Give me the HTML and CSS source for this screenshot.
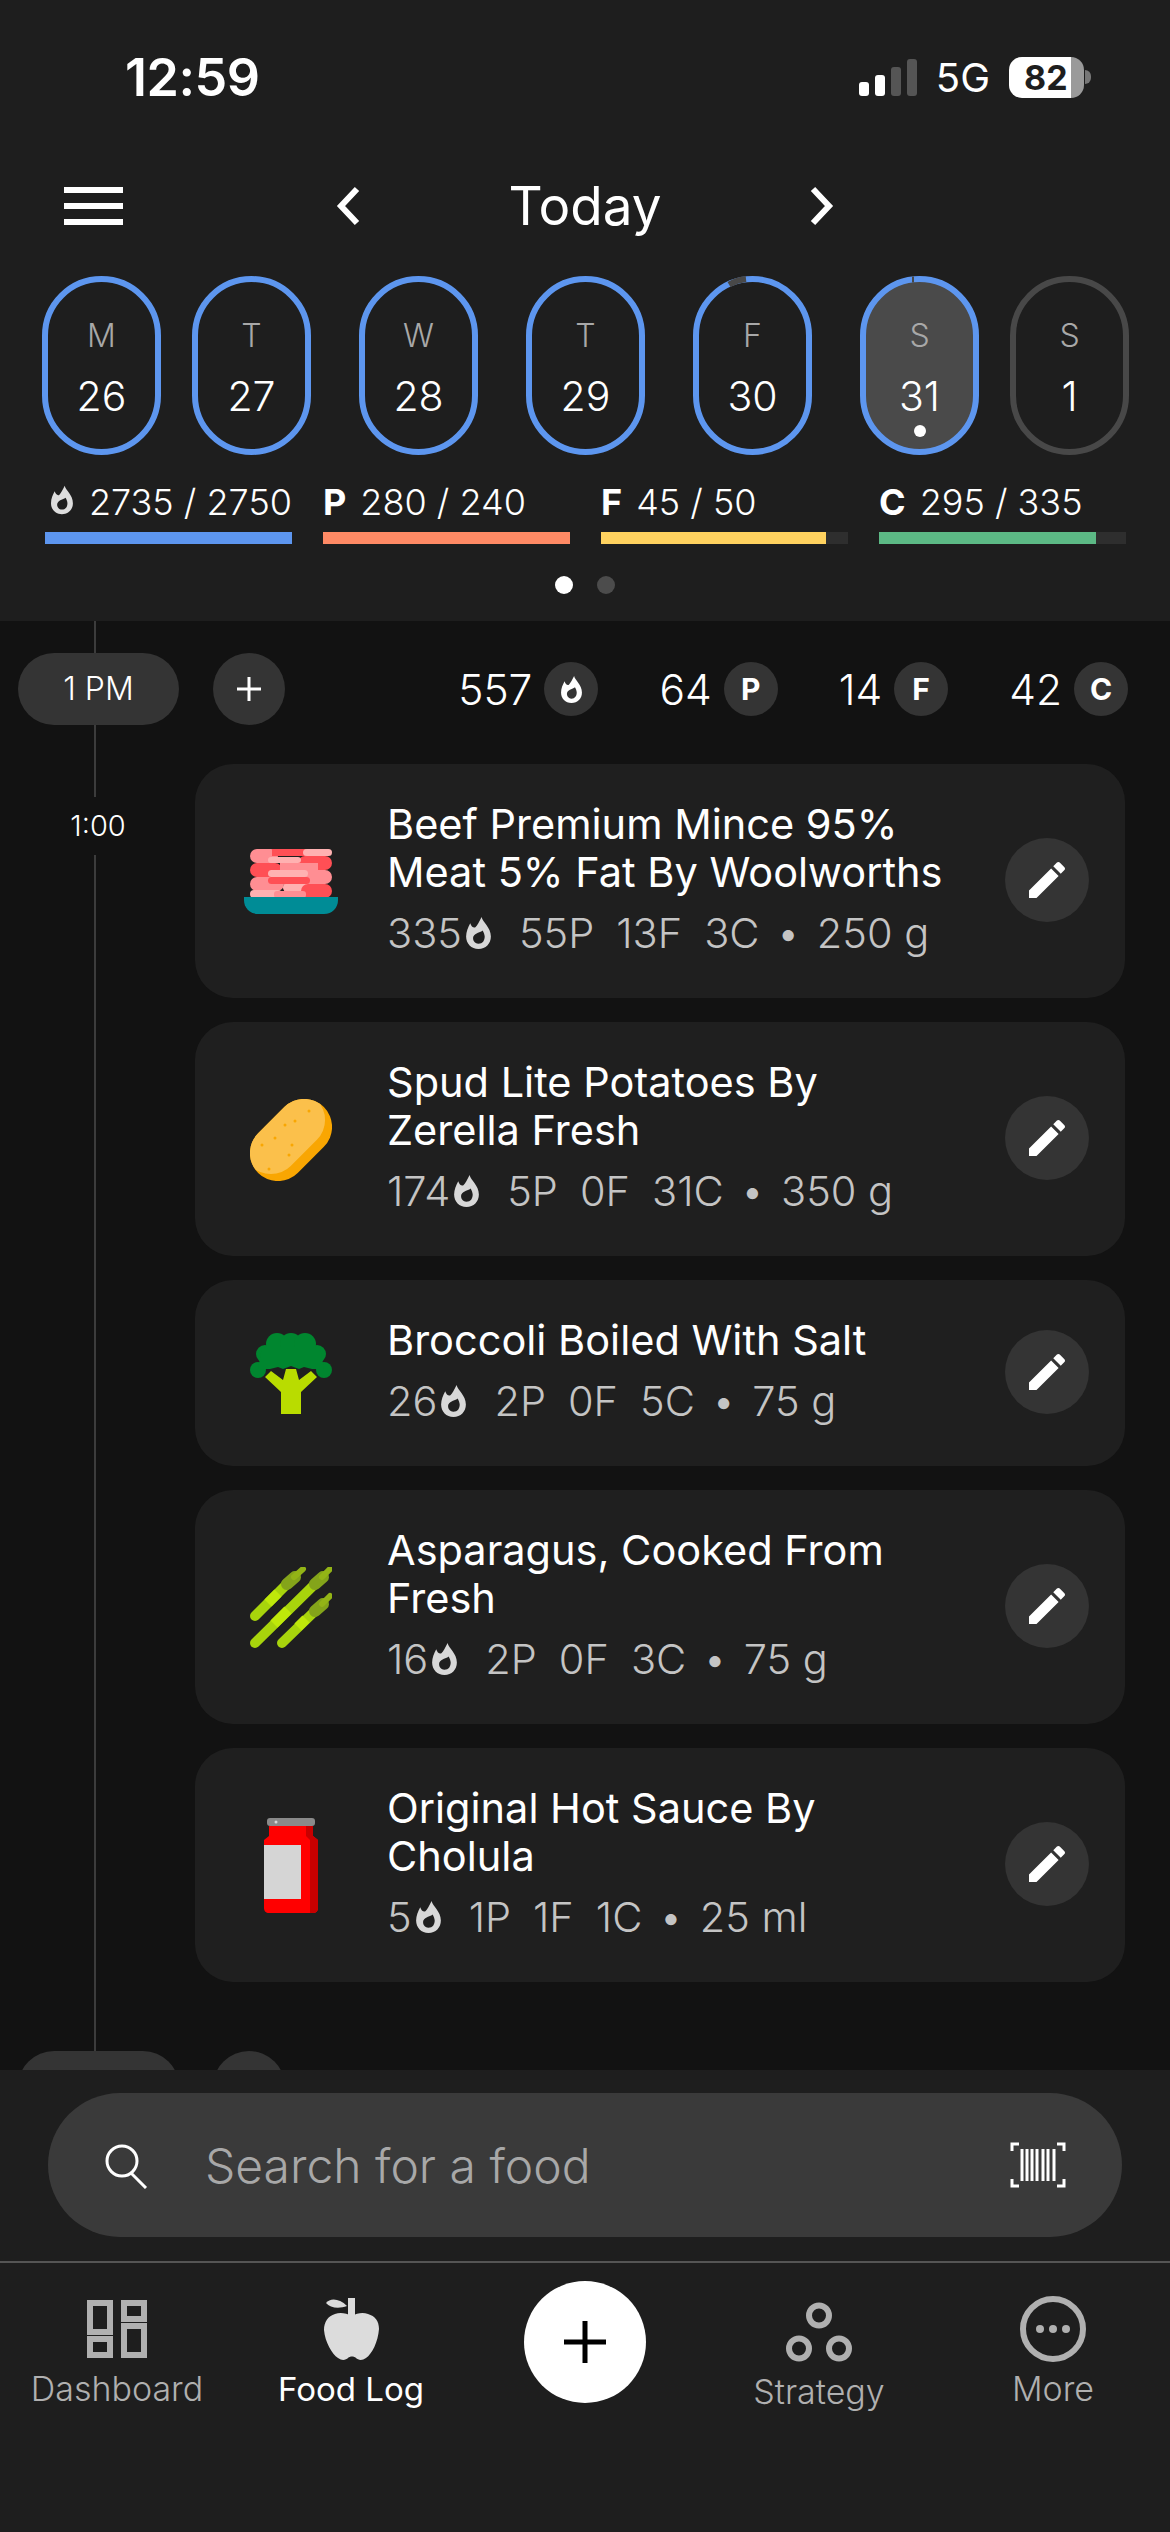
FILE: index.html
```html
<!DOCTYPE html>
<html lang="en">
  <head>
    <meta charset="UTF-8" />
    <meta name="viewport" content="width=device-width, initial-scale=1.0" />
    <title>Food Log</title>
    <link rel="stylesheet" href="styles.css">
  </head>
  <body>
    <svg class="defs" width="0" height="0">
      <symbol id="flame" viewBox="0 0 24 31">
        <path fill-rule="evenodd" d="M15 0c1 5 9 10 9 19 0 7-5 12-12 12S0 26 0 19c0-5 2-9 4-13 1 3 3 5 5 4 2-2 4-6 6-10zM16 13c-2 2-7 2-9 6-1 3 1 7 5 7s6-3 6-7c0-2-1-4-2-6z" />
      </symbol>
      <symbol id="pencil" viewBox="0 0 24 24">
        <path d="M3 17.250V21h3.750L17.810 9.940l-3.750-3.750L3 17.250zM20.710 7.040c.39-.39.39-1.020 0-1.410l-2.340-2.340c-.39-.39-1.020-.39-1.410 0l-1.830 1.830 3.750 3.750 1.830-1.830z" />
      </symbol>
      <clipPath id="potato-clip">
        <rect x="-5.500" y="13" width="93" height="56" rx="28" transform="rotate(-45 41 41)" />
      </clipPath>
    </svg>

    <div class="screen">
      <header class="top">
        <div class="status">
          <span class="clock">12:59</span>
          <div class="status-right">
            <div class="signal">
              <i class="bar-1"></i><i class="bar-2"></i><i class="bar-3"></i><i class="bar-4"></i>
            </div>
            <span class="network">5G</span>
            <div class="battery"><span>82</span></div>
            <i class="battery-nub"></i>
          </div>
        </div>

        <div class="nav">
          <div class="burger"><i></i><i></i><i></i></div>
          <div class="date-nav">
            <svg width="26" height="40" viewBox="0 0 26 40"><path d="M22 3 6 20l16 17" /></svg>
            <h1>Today</h1>
            <svg width="26" height="40" viewBox="0 0 26 40"><path d="m4 3 16 17L4 37" /></svg>
          </div>
        </div>

        <div class="days">
          <div class="day"><span>M</span><b>26</b></div>
          <div class="day"><span>T</span><b>27</b></div>
          <div class="day day-gap"><span>W</span><b>28</b></div>
          <div class="day day-gap"><span>T</span><b>29</b></div>
          <div class="day day-gap">
            <span>F</span><b>30</b>
            <svg class="arc" width="119" height="40" viewBox="0 0 119 40"><path d="M36 8.500Q44 4 53 3" /></svg>
          </div>
          <div class="day day-gap day-today">
            <span>S</span><b>31</b><i class="today-dot"></i>
            <svg class="arc" width="119" height="40" viewBox="0 0 119 40"><path d="M52 3.500h2" /></svg>
          </div>
          <div class="day day-next"><span>S</span><b>1</b></div>
        </div>

        <div class="macros">
          <div class="macro">
            <div class="macro-label"><svg class="flame-sm"><use href="#flame" /></svg>2735 / 2750</div>
            <div class="track"><div class="fill fill-cal" style="width: 100%"></div></div>
          </div>
          <div class="macro">
            <div class="macro-label"><strong>P</strong>280 / 240</div>
            <div class="track"><div class="fill fill-p" style="width: 100%"></div></div>
          </div>
          <div class="macro">
            <div class="macro-label"><strong>F</strong>45 / 50</div>
            <div class="track"><div class="fill fill-f" style="width: 91%"></div></div>
          </div>
          <div class="macro">
            <div class="macro-label"><strong>C</strong>295 / 335</div>
            <div class="track"><div class="fill fill-c" style="width: 88%"></div></div>
          </div>
        </div>

        <div class="pager"><i class="on"></i><i></i></div>
      </header>

      <main class="log">
        <div class="timeline"></div>
        <div class="time-label">1:00</div>

        <div class="meal-head">
          <div class="hour">1 PM</div>
          <div class="add-small">
            <svg width="30" height="30" viewBox="0 0 30 30"><path d="M15 3v24M3 15h24" /></svg>
          </div>
          <div class="totals">
            <div class="total"><span>557</span><i class="chip"><svg class="flame-chip"><use href="#flame" /></svg></i></div>
            <div class="total"><span>64</span><i class="chip">P</i></div>
            <div class="total"><span>14</span><i class="chip">F</i></div>
            <div class="total"><span>42</span><i class="chip">C</i></div>
          </div>
        </div>

        <div class="entries">
          <div class="card">
            <div class="food-icon">
              <svg width="94" height="65" viewBox="0 0 94 65">
                <rect x="6" y="0" width="28" height="14" rx="7" fill="#ff8e93" />
                <rect x="28" y="0" width="34" height="7" fill="#ff4f55" />
                <rect x="59" y="0" width="29" height="7" rx="3.500" fill="#ffb1b1" />
                <rect x="54" y="7" width="34" height="14" rx="7" fill="#ff4f55" />
                <rect x="24" y="8" width="33" height="6" rx="3" fill="#ffb1b1" />
                <rect x="6" y="14" width="32" height="14" rx="7" fill="#ff4f55" />
                <rect x="36" y="14" width="38" height="7" fill="#ff8e93" />
                <rect x="52" y="21" width="36" height="14" rx="7" fill="#ff8e93" />
                <rect x="24" y="21" width="40" height="7" rx="3.500" fill="#ffb1b1" />
                <rect x="6" y="28" width="34" height="14" rx="7" fill="#ff8e93" />
                <rect x="24" y="28" width="42" height="7" rx="3.500" fill="#ff4f55" />
                <rect x="40" y="35" width="40" height="7" fill="#ff8e93" />
                <rect x="39" y="35" width="35" height="7" rx="3.500" fill="#ffb1b1" />
                <rect x="57" y="35" width="31" height="14" rx="7" fill="#ff4f55" />
                <rect x="6" y="41" width="32" height="8" rx="4" fill="#ffb1b1" />
                <rect x="30" y="42" width="32" height="7" rx="3" fill="#ff8e93" />
                <path d="M0 48h94v3c0 8-6 14-14 14H14C6 65 0 59 0 51z" fill="#008c96" />
              </svg>
            </div>
            <div class="food-text">
              <div class="food-name">Beef Premium Mince 95%<br />Meat 5% Fat By Woolworths</div>
              <div class="food-meta">
                <span class="cal">335<svg class="flame-meta"><use href="#flame" /></svg></span>
                <span>55P</span><span>13F</span><span>3C</span><span class="sep">•</span><span>250 g</span>
              </div>
            </div>
            <button class="edit"><svg><use href="#pencil" /></svg></button>
          </div>

          <div class="card">
            <div class="food-icon">
              <svg width="82" height="82" viewBox="0 0 82 82">
                <rect x="-5.500" y="13" width="93" height="56" rx="28" transform="rotate(-45 41 41)" fill="#f9a602" />
                <g clip-path="url(#potato-clip)">
                  <rect x="-5.500" y="13" width="93" height="56" rx="28" transform="translate(-7 -7) rotate(-45 41 41)" fill="#fbc04b" />
                </g>
                <g fill="#f9a602">
                  <circle cx="59" cy="12" r="1.500" /><circle cx="35" cy="26" r="1.500" /><circle cx="45" cy="22" r="1.500" />
                  <circle cx="25" cy="39" r="1.500" /><circle cx="42" cy="46" r="1.500" /><circle cx="12" cy="46" r="1.500" />
                  <circle cx="39" cy="56" r="1.500" /><circle cx="19" cy="70" r="1.500" /><circle cx="76" cy="29" r="1.500" />
                  <circle cx="62" cy="52" r="1.500" /><circle cx="42" cy="73" r="1.500" />
                </g>
              </svg>
            </div>
            <div class="food-text">
              <div class="food-name">Spud Lite Potatoes By<br />Zerella Fresh</div>
              <div class="food-meta">
                <span class="cal">174<svg class="flame-meta"><use href="#flame" /></svg></span>
                <span>5P</span><span>0F</span><span>31C</span><span class="sep">•</span><span>350 g</span>
              </div>
            </div>
            <button class="edit"><svg><use href="#pencil" /></svg></button>
          </div>

          <div class="card">
            <div class="food-icon">
              <svg width="82" height="81" viewBox="0 0 82 81">
                <path d="M31 81V59L15 44l6-6 12 9 3-11h10l3 11 12-9 6 6-16 15v22z" fill="#b9dc00" />
                <g fill="#00862f">
                  <circle cx="8" cy="37" r="8" /><circle cx="74" cy="37" r="8" />
                  <circle cx="15" cy="21" r="9" /><circle cx="67" cy="21" r="9" />
                  <circle cx="27" cy="11" r="11" /><circle cx="41" cy="11" r="11" /><circle cx="55" cy="11" r="11" />
                  <path d="M12 14h58l4 22-12 0-8-2-5 2-8-3-8 3-5-2-8 2H8z" />
                </g>
              </svg>
            </div>
            <div class="food-text">
              <div class="food-name">Broccoli Boiled With Salt</div>
              <div class="food-meta">
                <span class="cal">26<svg class="flame-meta"><use href="#flame" /></svg></span>
                <span>2P</span><span>0F</span><span>5C</span><span class="sep">•</span><span>75 g</span>
              </div>
            </div>
            <button class="edit"><svg><use href="#pencil" /></svg></button>
          </div>

          <div class="card">
            <div class="food-icon">
              <svg class="asparagus" width="82" height="81" viewBox="0 0 82 81">
                <path d="M5 49 37 17" /><path d="M5 76 65 17" /><path d="M32 76 65 44" />
                <g class="asparagus-light">
                  <path d="M18 36 28 26" /><path d="M24 57 38 43" /><path d="M48 60 56 52" />
                </g>
                <g class="asparagus-tip">
                  <path d="M37 17 45 10" /><path d="M65 17 73 10" /><path d="M65 44 73 37" />
                </g>
                <g class="asparagus-end">
                  <path d="M44 10 53 2" /><path d="M72 10 80 2" /><path d="M72 37 80 29" />
                </g>
              </svg>
            </div>
            <div class="food-text">
              <div class="food-name">Asparagus, Cooked From<br />Fresh</div>
              <div class="food-meta">
                <span class="cal">16<svg class="flame-meta"><use href="#flame" /></svg></span>
                <span>2P</span><span>0F</span><span>3C</span><span class="sep">•</span><span>75 g</span>
              </div>
            </div>
            <button class="edit"><svg><use href="#pencil" /></svg></button>
          </div>

          <div class="card">
            <div class="food-icon">
              <svg width="54" height="95" viewBox="0 0 54 95">
                <rect x="3" y="0" width="48" height="8" rx="3" fill="#8a8a8a" />
                <circle cx="12" cy="4" r="1.500" fill="#d8d8d8" />
                <path d="M5 8h44v10l5 4v68c0 3-2 5-5 5H5c-3 0-5-2-5-5V22l5-4z" fill="#ff0000" />
                <path d="M42 8h7v10l5 4v68c0 3-2 5-5 5h-3V22l-4-4z" fill="#c80000" />
                <rect x="0" y="27" width="37" height="54" fill="#d5d5d5" />
              </svg>
            </div>
            <div class="food-text">
              <div class="food-name">Original Hot Sauce By<br />Cholula</div>
              <div class="food-meta">
                <span class="cal">5<svg class="flame-meta"><use href="#flame" /></svg></span>
                <span>1P</span><span>1F</span><span>1C</span><span class="sep">•</span><span>25 ml</span>
              </div>
            </div>
            <button class="edit"><svg><use href="#pencil" /></svg></button>
          </div>
        </div>

        <div class="meal-head meal-next">
          <div class="hour"></div>
          <div class="add-small"></div>
        </div>
      </main>

      <footer class="bottom">
        <div class="search-wrap">
          <div class="search">
            <svg class="search-icon" width="46" height="46" viewBox="0 0 46 46">
              <circle cx="18" cy="18" r="15" /><path d="m27 30 15 15" />
            </svg>
            <span class="search-text">Search for a food</span>
            <svg class="barcode" width="56" height="46" viewBox="0 0 56 46">
              <path class="corners" d="M9 2H2v7M47 2h7v7M9 44H2v-7M47 44h7v-7" />
              <path class="lines" d="M12 7v32M17 7v32M22 7v32M27 7v32M33 7v32M38 7v32M44 7v32" />
            </svg>
          </div>
        </div>

        <nav class="tabs">
          <div class="tab">
            <svg class="tab-icon" width="60" height="58" viewBox="0 0 60 58">
              <g class="stroke-grey">
                <rect x="3" y="3" width="20" height="29" /><rect x="37" y="3" width="20" height="16" />
                <rect x="3" y="39" width="20" height="16" /><rect x="37" y="26" width="20" height="29" />
              </g>
            </svg>
            <span>Dashboard</span>
          </div>
          <div class="tab tab-active">
            <svg class="tab-icon" width="55" height="62" viewBox="0 0 55 62">
              <g fill="#dcdcdc">
                <path d="M28 18C22 15 16 14 11 16 4 18 0 24 0 32c1 12 8 24 14 28 4 3 8 2 10 0 2-2 6-2 8 0 2 2 6 3 10 0 6-4 12-16 13-29 0-8-4-13-11-15-5-2-11-1-16 2z" />
                <path d="M2 5C6 0 15 0 23 8 15 11 6 10 2 5z" />
                <rect x="24" y="0" width="7" height="18" />
              </g>
            </svg>
            <span>Food Log</span>
          </div>
          <div class="tab tab-add">
            <div class="add-big">
              <svg width="46" height="46" viewBox="0 0 46 46"><path d="M23 2v42M2 23h42" /></svg>
            </div>
          </div>
          <div class="tab tab-low">
            <svg class="tab-icon" width="66" height="59" viewBox="0 0 66 59">
              <g class="stroke-grey">
                <circle cx="33" cy="13" r="10" /><circle cx="13" cy="46" r="10" /><circle cx="53" cy="46" r="10" />
              </g>
            </svg>
            <span>Strategy</span>
          </div>
          <div class="tab">
            <svg class="tab-icon" width="66" height="66" viewBox="0 0 66 66">
              <circle class="stroke-grey" cx="33" cy="33" r="30" />
              <circle cx="20" cy="33" r="4" fill="#b0b0b0" /><circle cx="33" cy="33" r="4" fill="#b0b0b0" /><circle cx="46" cy="33" r="4" fill="#b0b0b0" />
            </svg>
            <span>More</span>
          </div>
        </nav>
      </footer>
    </div>
  </body>
</html>
```

FILE: styles.css
```css
/* Basic reset */
* {
  margin: 0;
  padding: 0;
  box-sizing: border-box;
}

body {
  font-family: Inter, "Noto Sans", sans-serif;
  background-color: #1e1e1e;
  color: #fff;
}

i {
  font-style: normal;
}

.defs {
  display: block;
  height: 0;
}

.defs symbol,
svg use {
  fill: currentColor;
}

.screen {
  width: 1170px;
  height: 2532px;
  display: flex;
  flex-direction: column;
  overflow: hidden;
}

/* Header */
.top {
  height: 621px;
  background-color: #1e1e1e;
  flex-shrink: 0;
}

.status {
  height: 154px;
  display: flex;
  align-items: center;
  justify-content: space-between;
  padding: 0 79px 0 125px;
}

.clock {
  font-size: 52px;
  font-weight: 600;
  letter-spacing: -0.5px;
}

.status-right {
  display: flex;
  align-items: center;
}

.signal {
  display: flex;
  align-items: flex-end;
  gap: 6px;
  height: 37px;
  margin-right: 19px;
}

.signal i {
  display: block;
  width: 10px;
  border-radius: 3px;
  background-color: #fff;
}

.signal .bar-1 { height: 14px; }
.signal .bar-2 { height: 21px; }
.signal .bar-3 { height: 29px; background-color: #555; }
.signal .bar-4 { height: 37px; background-color: #555; }

.network {
  font-size: 40px;
  margin-right: 19px;
}

.battery {
  width: 75px;
  height: 41px;
  border-radius: 13px;
  background: linear-gradient(to right, #fff 83%, #9a9a9a 83%);
  color: #1e1e1e;
  font-size: 34px;
  font-weight: 700;
  line-height: 41px;
  padding-left: 15px;
}

.battery-nub {
  width: 6px;
  height: 14px;
  margin-left: 1px;
  border-radius: 0 7px 7px 0;
  background-color: #777;
}

.nav {
  position: relative;
  height: 80px;
  margin-top: 12px;
  display: flex;
  align-items: center;
  padding-left: 64px;
}

.burger {
  width: 59px;
}

.burger i {
  display: block;
  height: 6px;
  margin-bottom: 10px;
  background-color: #fff;
}

.burger i:last-child {
  margin-bottom: 0;
}

.date-nav {
  display: flex;
  align-items: center;
  width: 500px;
  margin-left: 212px;
  justify-content: space-between;
}

.date-nav h1 {
  font-size: 53px;
  font-weight: 400;
  line-height: 80px;
}

.date-nav svg path {
  fill: none;
  stroke: #fff;
  stroke-width: 6;
}

/* Week strip */
.days {
  display: flex;
  gap: 31px;
  margin-top: 30px;
  padding-left: 42px;
}

.day {
  position: relative;
  width: 119px;
  height: 179px;
  border: 6px solid #5d96ef;
  border-radius: 60px;
  display: flex;
  flex-direction: column;
  align-items: center;
  padding-top: 34px;
}

.day-gap {
  margin-left: 17px;
}

.day-gap + .day-next {
  margin-left: 0;
}

.day span {
  font-size: 32px;
  font-weight: 300;
  line-height: 40px;
  color: #a8a8a8;
}

.day b {
  font-size: 41px;
  font-weight: 300;
  line-height: 48px;
  margin-top: 16px;
}

.day-today {
  background-color: #4a4a4a;
}

.day-next {
  border-color: #484848;
}

.today-dot {
  position: absolute;
  left: 47.5px;
  top: 143px;
  width: 12px;
  height: 12px;
  border-radius: 50%;
  background-color: #fff;
}

.arc {
  position: absolute;
  left: -6px;
  top: -6px;
}

.arc path {
  fill: none;
  stroke: #484848;
  stroke-width: 6;
}

/* Macro bars */
.macros {
  display: grid;
  grid-template-columns: repeat(4, 247px);
  gap: 31px;
  margin-top: 30px;
  padding-left: 45px;
}

.macro-label {
  display: flex;
  align-items: center;
  height: 34px;
  font-size: 36px;
  font-weight: 300;
  white-space: nowrap;
}

.macro-label strong {
  font-weight: 700;
  margin-right: 14px;
}

.flame-sm {
  width: 25px;
  height: 32px;
  margin: -4px 16px 0 6px;
  color: #ddd;
}

.track {
  height: 12px;
  margin-top: 13px;
  background-color: #2e2e2e;
}

.fill {
  height: 100%;
}

.fill-cal { background-color: #5d96ef; }
.fill-p { background-color: #ff8a65; }
.fill-f { background-color: #ffd25f; }
.fill-c { background-color: #5cb985; }

.pager {
  display: flex;
  justify-content: center;
  gap: 24px;
  margin-top: 32px;
}

.pager i {
  width: 18px;
  height: 18px;
  border-radius: 50%;
  background-color: #4c4c4c;
}

.pager .on {
  background-color: #fff;
}

/* Log list */
.log {
  position: relative;
  flex: 1;
  background-color: #121212;
  padding-top: 32px;
  overflow: hidden;
}

.timeline {
  position: absolute;
  left: 94px;
  top: 0;
  bottom: 0;
  width: 2px;
  background-color: #3c3c3c;
}

.time-label {
  position: absolute;
  left: 60px;
  top: 176px;
  width: 76px;
  height: 58px;
  background-color: #121212;
  font-size: 29px;
  font-weight: 300;
  line-height: 58px;
  text-align: center;
}

.meal-head {
  position: relative;
  display: flex;
  align-items: center;
  height: 72px;
  padding-left: 18px;
}

.hour {
  width: 161px;
  height: 72px;
  border-radius: 36px;
  background-color: #343434;
  font-size: 32px;
  font-weight: 300;
  line-height: 72px;
  text-align: center;
}

.add-small {
  width: 72px;
  height: 72px;
  margin-left: 34px;
  border-radius: 50%;
  background-color: #343434;
  display: flex;
  align-items: center;
  justify-content: center;
}

.add-small path {
  fill: none;
  stroke: #fff;
  stroke-width: 3;
}

.totals {
  display: flex;
  margin-left: auto;
  padding-right: 42px;
}

.total {
  display: flex;
  align-items: center;
  gap: 12px;
  margin-left: 61px;
  font-size: 42.5px;
  font-weight: 300;
}

.chip {
  width: 54px;
  height: 54px;
  border-radius: 50%;
  background-color: #343434;
  display: flex;
  align-items: center;
  justify-content: center;
  font-size: 30px;
  font-weight: 700;
}

.flame-chip {
  width: 21px;
  height: 27px;
}

.entries {
  position: relative;
  display: flex;
  flex-direction: column;
  gap: 24px;
  margin: 39px 45px 0 195px;
}

.card {
  display: flex;
  align-items: center;
  padding: 36px 36px 41px 49px;
  background-color: #1f1f1f;
  border-radius: 38px;
}

.food-icon {
  width: 94px;
  flex-shrink: 0;
  display: flex;
  justify-content: center;
  margin-top: 6px;
}

.food-icon svg {
  display: block;
}

.food-text {
  flex: 1;
  margin-left: 49px;
}

.food-name {
  font-size: 41.5px;
  line-height: 48px;
  white-space: nowrap;
}

.food-meta {
  display: flex;
  gap: 22px;
  margin-top: 13px;
  font-size: 41.5px;
  font-weight: 300;
  line-height: 48px;
  color: #c4c4c4;
  white-space: nowrap;
}

.cal {
  display: flex;
  align-items: center;
  margin-right: 6px;
}

.sep {
  margin: 0 -5px;
}

.flame-meta {
  width: 25px;
  height: 32px;
  margin-left: 4px;
  color: #d8d8d8;
}

.edit {
  width: 84px;
  height: 84px;
  flex-shrink: 0;
  margin-top: 2px;
  border: none;
  border-radius: 50%;
  background-color: #343434;
  color: #fff;
  display: flex;
  align-items: center;
  justify-content: center;
}

.edit svg {
  width: 48px;
  height: 48px;
}

.asparagus path {
  fill: none;
  stroke-linecap: round;
}

.asparagus > path {
  stroke: #a8d40c;
  stroke-width: 10;
}

.asparagus-light path {
  stroke: #bfe80a;
  stroke-width: 10;
  stroke-linecap: butt;
}

.asparagus-tip path {
  stroke: #84a41a;
  stroke-width: 12;
}

.asparagus-end path {
  stroke: #93b416;
  stroke-width: 6;
}

.meal-next {
  margin-top: 69px;
}

/* Bottom bar */
.bottom {
  position: relative;
  height: 462px;
  flex-shrink: 0;
  background-color: #1e1e1e;
}

.search-wrap {
  padding: 23px 48px 24px;
  border-bottom: 2px solid #555;
}

.search {
  height: 144px;
  border-radius: 72px;
  background-color: #3a3a3a;
  display: flex;
  align-items: center;
  padding: 0 56px 0 56px;
}

.search-icon {
  margin-top: 2px;
}

.search-icon circle,
.search-icon path {
  fill: none;
  stroke: #fff;
  stroke-width: 3;
}

.search-text {
  flex: 1;
  margin-left: 55px;
  font-size: 48px;
  font-weight: 300;
  color: #a8a8a8;
}

.barcode path {
  fill: none;
  stroke: #fff;
}

.barcode .corners {
  stroke-width: 3;
}

.barcode .lines {
  stroke-width: 3;
}

.tabs {
  display: grid;
  grid-template-columns: repeat(5, 234px);
}

.tab {
  display: flex;
  flex-direction: column;
  align-items: center;
  padding-top: 32px;
  font-size: 34px;
  font-weight: 300;
  color: #b0b0b0;
}

.tab span {
  line-height: 36px;
  margin-top: 8px;
}

.tab-icon {
  display: block;
  height: 68px;
}

.tab-active {
  color: #fff;
  font-size: 33px;
  font-weight: 400;
}

.tab-low {
  padding-top: 38px;
}

.tab-low .tab-icon {
  height: 62px;
}

.tab-low span {
  margin-top: 11px;
}

.tab-add {
  padding-top: 18px;
}

.add-big {
  width: 122px;
  height: 122px;
  border-radius: 50%;
  background-color: #fff;
  display: flex;
  align-items: center;
  justify-content: center;
}

.add-big path {
  fill: none;
  stroke: #000;
  stroke-width: 5;
}

.stroke-grey,
.stroke-grey rect,
.stroke-grey circle {
  fill: none;
  stroke: #b0b0b0;
  stroke-width: 6;
}
```
